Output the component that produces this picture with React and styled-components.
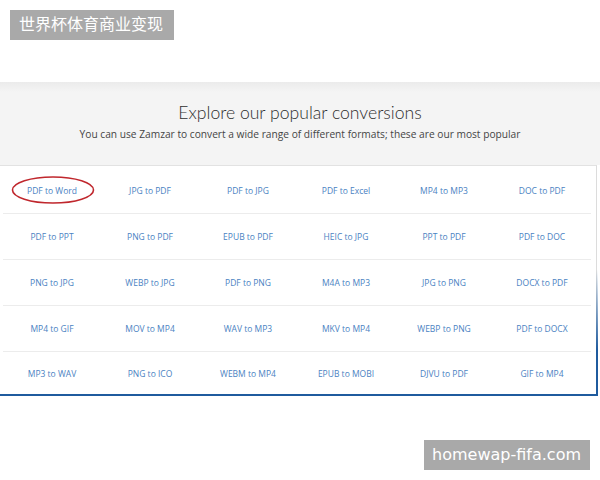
import React from "react";
import styled, { createGlobalStyle } from "styled-components";

const Global = createGlobalStyle`
  html, body { margin: 0; padding: 0; background: #ffffff; }
  body { font-family: "Open Sans", "Liberation Sans", sans-serif; }
`;

const Page = styled.div`
  position: relative;
  width: 600px;
  height: 480px;
  overflow: hidden;
  background: #ffffff;
  padding-top: 82px;
  box-sizing: border-box;
`;

const Stamp = styled.div`
  position: absolute;
  ${(p) =>
    p.$corner === "top"
      ? "top: 10px; left: 10px; padding: 0 11px 0 9px;"
      : "bottom: 10px; right: 10px; padding: 0 9px 0 8px;"}
  height: 30px;
  display: flex;
  align-items: center;
  background: #a9a9a9;
  color: #ffffff;
  font-family: "DejaVu Sans", "Noto Sans CJK SC", sans-serif;
  font-size: 16px;
  line-height: 1;
`;

const Band = styled.section`
  height: 83px;
  background: linear-gradient(#ebebeb 0px, #f4f4f4 10px, #f4f4f4 100%);
  display: flex;
  flex-direction: column;
  align-items: center;
  padding-top: 19px;
  box-sizing: border-box;
`;

const Title = styled.h2`
  margin: 0;
  font-family: Lato, "Open Sans", sans-serif;
  font-weight: 300;
  font-size: 17.6px;
  line-height: 24px;
  color: #2e2e2e;
`;

const Subtitle = styled.p`
  margin: 1px 0 0;
  font-family: "Open Sans", sans-serif;
  font-size: 10.2px;
  line-height: 16px;
  color: #444444;
`;

const Card = styled.div`
  position: relative;
  width: 597px;
  box-sizing: border-box;
  background: #ffffff;
  border-top: 1px solid #e2e2e2;
  border-right: 1px solid #dcdcdc;
  border-bottom: 2px solid #1f5b9e;
  padding: 2px 5px 0 3px;

  &::after {
    content: "";
    position: absolute;
    right: -2px;
    top: 0;
    bottom: -2px;
    width: 2px;
    background: linear-gradient(rgba(31, 91, 158, 0) 45%, #1f5b9e 80%);
  }
`;

const Row = styled.div`
  display: grid;
  grid-template-columns: repeat(6, 1fr);
  height: ${(p) => (p.$last ? "42px" : "46px")};
  border-bottom: ${(p) => (p.$last ? "none" : "1px solid #ececec")};
  box-sizing: border-box;
`;

const Cell = styled.a`
  position: relative;
  display: flex;
  align-items: center;
  justify-content: center;
  font-family: "Open Sans", sans-serif;
  font-size: 8.5px;
  color: #4a82c2;
  text-decoration: none;
`;

const Ring = styled.svg`
  position: absolute;
  left: 8px;
  top: 7px;
  width: 84px;
  height: 30px;
  overflow: visible;
`;

const rows = [
  ["PDF to Word", "JPG to PDF", "PDF to JPG", "PDF to Excel", "MP4 to MP3", "DOC to PDF"],
  ["PDF to PPT", "PNG to PDF", "EPUB to PDF", "HEIC to JPG", "PPT to PDF", "PDF to DOC"],
  ["PNG to JPG", "WEBP to JPG", "PDF to PNG", "M4A to MP3", "JPG to PNG", "DOCX to PDF"],
  ["MP4 to GIF", "MOV to MP4", "WAV to MP3", "MKV to MP4", "WEBP to PNG", "PDF to DOCX"],
  ["MP3 to WAV", "PNG to ICO", "WEBM to MP4", "EPUB to MOBI", "DJVU to PDF", "GIF to MP4"],
];

export default function App() {
  return (
    <>
      <Global />
      <Page>
        <Band>
          <Title>Explore our popular conversions</Title>
          <Subtitle>
            You can use Zamzar to convert a wide range of different formats; these are our most popular
          </Subtitle>
        </Band>
        <Card>
          {rows.map((r, i) => (
            <Row key={i} $last={i === rows.length - 1}>
              {r.map((label, j) => (
                <Cell key={label} href="#">
                  {label}
                  {i === 0 && j === 0 && (
                    <Ring viewBox="0 0 84 30">
                      <ellipse cx="42" cy="15" rx="40.5" ry="13" fill="none" stroke="#c0272d" strokeWidth="1.6" />
                    </Ring>
                  )}
                </Cell>
              ))}
            </Row>
          ))}
        </Card>
        <Stamp $corner="top">世界杯体育商业变现</Stamp>
        <Stamp $corner="bottom">homewap-fifa.com</Stamp>
      </Page>
    </>
  );
}
